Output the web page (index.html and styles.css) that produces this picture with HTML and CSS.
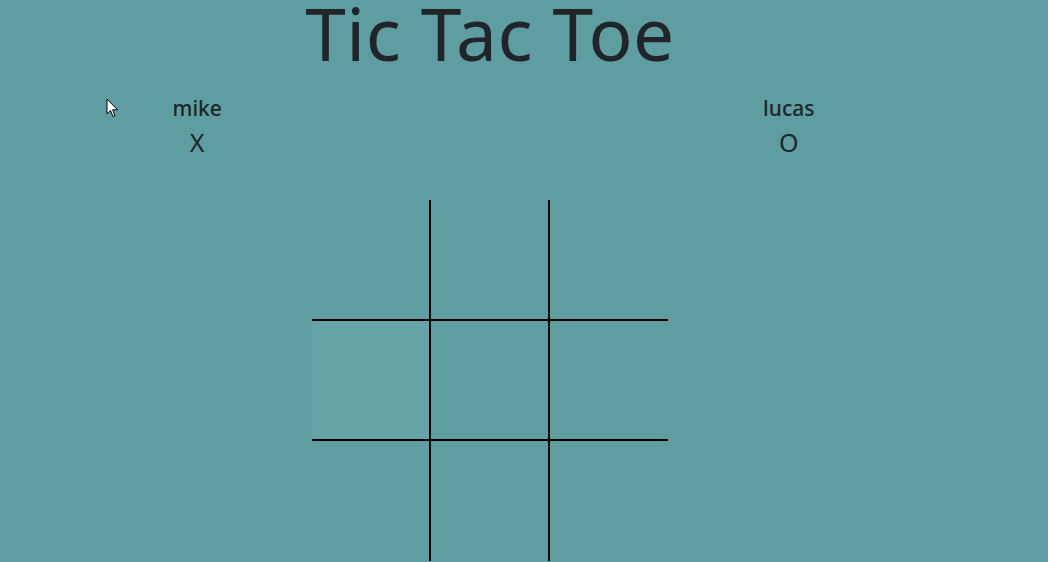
FILE: index.html
```html
<!DOCTYPE html>
<html>
<head>
<meta charset="utf-8">
<link rel="stylesheet" href="styles.css">
</head>
<body>
<div class="app">
  <h1 class="title">Tic Tac Toe</h1>
  <div class="players">
    <div class="player">
      <div class="name">mike</div>
      <div class="mark">X</div>
    </div>
    <div class="player">
      <div class="name">lucas</div>
      <div class="mark">O</div>
    </div>
  </div>
  <div class="board">
    <div class="cell b-r b-b"></div>
    <div class="cell b-r b-b"></div>
    <div class="cell b-b"></div>
    <div class="cell b-r b-b hover"></div>
    <div class="cell b-r b-b"></div>
    <div class="cell b-b"></div>
    <div class="cell b-r"></div>
    <div class="cell b-r"></div>
    <div class="cell"></div>
  </div>
</div>
<svg class="cursor" width="14" height="22" viewBox="0 0 14 22">
  <path d="M1 1 L1 16 L4.5 12.5 L7 18.5 L9 17.6 L6.6 11.8 L11.5 11.8 Z" fill="#fff" stroke="#000" stroke-width="1" stroke-linejoin="round"/>
</svg>
</body>
</html>
```
FILE: styles.css
```css
html, body {
  margin: 0;
  padding: 0;
  background: #5f9ea0;
  color: #212529;
  font-family: "Noto Sans", "Open Sans", sans-serif;
  overflow: hidden;
}
.app {
  width: 980px;
  display: flex;
  flex-direction: column;
  align-items: center;
}
.title {
  margin: -4px 0 0;
  font-size: 73px;
  font-weight: 400;
  line-height: 73px;
  letter-spacing: 0.5px;
  height: 86px;
}
.players {
  align-self: flex-start;
  width: 986px;
  display: grid;
  grid-template-columns: 2fr 1fr 2fr;
  margin-top: 12px;
}
.player {
  display: flex;
  flex-direction: column;
  align-items: center;
}
.player:last-child {
  grid-column: 3;
}
.name {
  font-size: 21px;
  font-weight: 500;
  line-height: 28px;
}
.mark {
  font-size: 25px;
  line-height: 40px;
}
.board {
  margin-top: 38px;
  display: grid;
  grid-template-columns: 119px 119px 118px;
  grid-template-rows: 121px 120px 120px;
}
.cell {
  box-sizing: border-box;
}
.b-r { border-right: 2px solid #000; }
.b-b { border-bottom: 2px solid #000; }
.hover { background: #67a4a5; }
.cursor {
  position: absolute;
  left: 106px;
  top: 98px;
}
```
